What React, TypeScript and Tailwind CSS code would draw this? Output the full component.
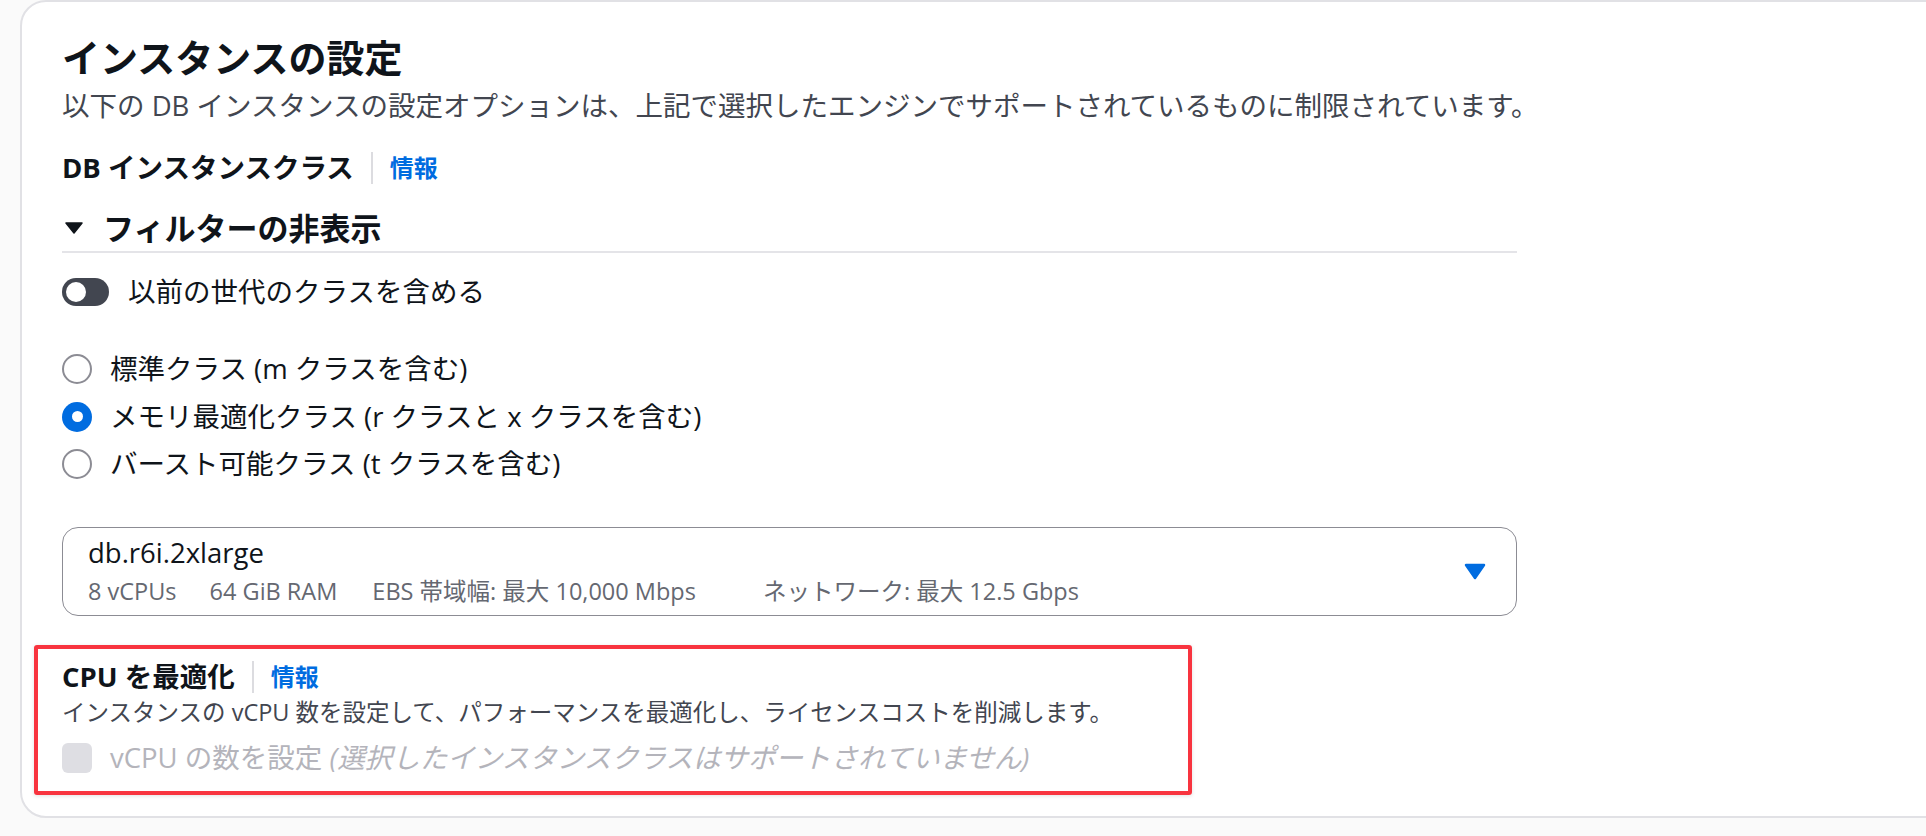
import React from "react";

const ink = "text-[#0f141a]";

function FieldLabel({ label }: { label: string }) {
  return (
    <div className="flex h-[36px] items-center">
      <span className={`text-[27.5px] font-bold leading-[36px] ${ink}`}>{label}</span>
      <span className="mx-[17px] h-[32px] w-[2px] bg-[#dcdce0]" />
      <a className="text-[24px] font-bold leading-[36px] text-[#006ce0]">情報</a>
    </div>
  );
}

function Radio({ checked, children }: { checked?: boolean; children: React.ReactNode }) {
  return (
    <label className="flex h-[36px] items-center">
      {checked ? (
        <span className="flex size-[30px] items-center justify-center rounded-full bg-[#006ce0]">
          <span className="size-[11px] rounded-full bg-white" />
        </span>
      ) : (
        <span className="size-[30px] rounded-full border-2 border-[#8c8c94] bg-white" />
      )}
      <span className={`ml-[18px] text-[27.5px] leading-[36px] ${ink}`}>{children}</span>
    </label>
  );
}

export default function App() {
  return (
    <div className="h-[836px] w-[1926px] overflow-hidden bg-[#fafafa] font-['Open_Sans','Noto_Sans_CJK_JP',sans-serif]">
      <div className="ml-[20px] w-[1940px] rounded-l-[26px] border-2 border-[#e1e1e5] bg-white pb-[21px] pl-[40px] pt-[32px]">
        {/* header */}
        <h2 className={`text-[38px] font-bold leading-[46px] ${ink}`}>インスタンスの設定</h2>
        <p className="mt-[8px] text-[27.5px] leading-[36px] text-[#424650]">
          以下の DB インスタンスの設定オプションは、上記で選択したエンジンでサポートされているものに制限されています。
        </p>

        <div className="w-[1455px]">
          <div className="mt-[26px]">
            <FieldLabel label="DB インスタンスクラス" />
          </div>

          {/* filters */}
          <div className="mt-[22px] flex h-[40px] items-center">
            <svg width="18" height="12" viewBox="0 0 18 12" className="ml-[3px]">
              <path d="M1 1h16L9 11z" fill="#0f141a" stroke="#0f141a" strokeWidth="1.5" strokeLinejoin="round" />
            </svg>
            <span className={`ml-[20px] text-[31px] font-bold leading-[40px] ${ink}`}>フィルターの非表示</span>
          </div>
          <div className="mt-[3px] h-[2px] bg-[#e4e4e8]" />

          <div className="mt-[21px] flex h-[36px] items-center">
            <span className="relative h-[28px] w-[47px] rounded-full bg-[#424650]">
              <span className="absolute left-[4px] top-[4px] size-[20px] rounded-full bg-white" />
            </span>
            <span className={`ml-[19px] text-[27.5px] leading-[36px] ${ink}`}>以前の世代のクラスを含める</span>
          </div>

          <div className="mt-[41px] flex flex-col gap-[11.5px]">
            <Radio>標準クラス (m クラスを含む)</Radio>
            <Radio checked>メモリ最適化クラス (r クラスと x クラスを含む)</Radio>
            <Radio>バースト可能クラス (t クラスを含む)</Radio>
          </div>

          {/* select */}
          <div className="mt-[45px] flex h-[89px] items-center justify-between rounded-[16px] border border-[#8c8c94] pl-[25px] pr-[30px]">
            <div className="flex flex-col gap-[8px]">
              <span className={`text-[27.5px] leading-[30px] ${ink}`}>db.r6i.2xlarge</span>
              <div className="flex text-[23.5px] leading-[30px] text-[#656871]">
                <span>8 vCPUs</span>
                <span className="ml-[33px]">64 GiB RAM</span>
                <span className="ml-[35px]">EBS 帯域幅: 最大 10,000 Mbps</span>
                <span className="ml-[67px]">ネットワーク: 最大 12.5 Gbps</span>
              </div>
            </div>
            <svg width="22" height="17" viewBox="0 0 22 17">
              <path d="M2 2h18L11 15z" fill="#006ce0" stroke="#006ce0" strokeWidth="2.5" strokeLinejoin="round" />
            </svg>
          </div>
        </div>

        {/* cpu optimisation, outlined in red */}
        <div className="-ml-[28px] mt-[29px] w-[1158px] rounded-[3px] border-4 border-[#f8343f] pb-[15px] pl-[24px] pt-[10px] shadow-[0_1px_4px_rgba(0,0,0,0.12)]">
          <FieldLabel label="CPU を最適化" />
          <p className="mt-[2px] text-[23.5px] leading-[30px] text-[#424650]">
            インスタンスの vCPU 数を設定して、パフォーマンスを最適化し、ライセンスコストを削減します。
          </p>
          <div className="mt-[13px] flex h-[36px] items-center">
            <span className="size-[30px] rounded-[6px] bg-[#dedee3]" />
            <span className="ml-[18px] text-[27.5px] leading-[36px] text-[#b4b4bb]">
              vCPU の数を設定 <i>(選択したインスタンスクラスはサポートされていません)</i>
            </span>
          </div>
        </div>
      </div>
    </div>
  );
}
